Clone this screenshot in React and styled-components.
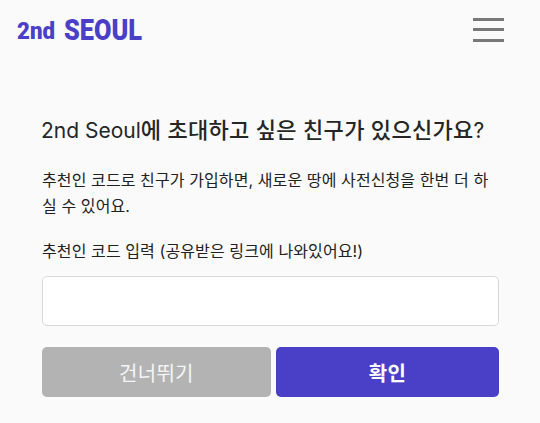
import React from 'react'
import styled, { createGlobalStyle } from 'styled-components';

const GlobalStyle = createGlobalStyle`
    html, body {
        margin: 0;
        padding: 0;
        background-color: #fafafa;
    }
    body {
        font-family: Inter, "Noto Sans CJK KR", sans-serif;
        color: #212121;
    }
`;

const Page = styled.div`
    width: 540px;
    height: 423px;
    overflow: hidden;
    display: flex;
    flex-direction: column;
`;

const Header = styled.header`
    height: 60px;
    padding: 0 36px 1px 17px;
    display: flex;
    align-items: center;
    justify-content: space-between;
    box-sizing: border-box;
`;

const LogoMark = styled.svg`
    display: block;
    width: 200px;
    height: 40px;
    overflow: visible;
`;

const LogoText = styled.text`
    fill: #4a3fc7;
    font-family: Roboto, sans-serif;
    font-weight: 900;
`;

const LogoCut = styled.rect`
    fill: #fafafa;
`;

const MenuButton = styled.div`
    width: 31px;
    display: flex;
    flex-direction: column;
    gap: 7.5px;
`;

const MenuLine = styled.span`
    height: 3px;
    background-color: #787878;
`;

const Content = styled.main`
    padding: 55px 41px 0 42px;
    display: flex;
    flex-direction: column;
`;

const Title = styled.h2`
    margin: 0 0 0 -1px;
    height: 32px;
    font-size: 22px;
    font-weight: 500;
    line-height: 30px;
    letter-spacing: 0.3px;
    color: #262626;
`;

const TitleLatin = styled.span`
    font-size: 21px;
    font-weight: 400;
    letter-spacing: 0;
`;

const Description = styled.p`
    margin: 20px 0 0;
    font-size: 16px;
    line-height: 26px;
    letter-spacing: 0.1px;
`;

const Label = styled.label`
    margin-top: 20px;
    font-size: 16px;
    line-height: 24px;
    letter-spacing: 0.1px;
`;

const Input = styled.input`
    margin-top: 13px;
    height: 50px;
    box-sizing: border-box;
    background-color: #fff;
    border: 1px solid #d8d8dc;
    border-radius: 5px;
`;

const Actions = styled.div`
    margin-top: 21px;
    display: flex;
    gap: 5px;
`;

const Button = styled.button`
    flex: ${props => props.$flex};
    width: 0;
    height: 50px;
    border: none;
    border-radius: 5px;
    background-color: ${props => props.$primary ? '#4a3fc7' : '#b3b3b3'};
    color: ${props => props.$primary ? '#fff' : '#f5f5f5'};
    font-family: Inter, "Noto Sans CJK KR", sans-serif;
    font-size: 20px;
    letter-spacing: 0.3px;
    font-weight: ${props => props.$primary ? 700 : 400};
`;

const App = () => {
  return (
    <Page>
        <GlobalStyle />
        <Header>
            <LogoMark viewBox="0 0 200 40">
                <LogoText x="0" y="29" fontSize="24" textLength="38" lengthAdjust="spacingAndGlyphs">2nd</LogoText>
                <LogoText x="47" y="30" fontSize="30" textLength="78" lengthAdjust="spacingAndGlyphs">SEOUL</LogoText>
                <LogoCut x="92.5" y="8" width="1" height="4" />
                <LogoCut x="92.5" y="26" width="1" height="4" />
            </LogoMark>
            <MenuButton>
                <MenuLine />
                <MenuLine />
                <MenuLine />
            </MenuButton>
        </Header>
        <Content>
            <Title><TitleLatin>2nd Seoul</TitleLatin>에 초대하고 싶은 친구가 있으신가요<TitleLatin>?</TitleLatin></Title>
            <Description>추천인 코드로 친구가 가입하면, 새로운 땅에 사전신청을 한번 더 하실 수 있어요.</Description>
            <Label>추천인 코드 입력 (공유받은 링크에 나와있어요!)</Label>
            <Input />
            <Actions>
                <Button $flex={229}>건너뛰기</Button>
                <Button $flex={223} $primary>확인</Button>
            </Actions>
        </Content>
    </Page>
  )
}

export default App
